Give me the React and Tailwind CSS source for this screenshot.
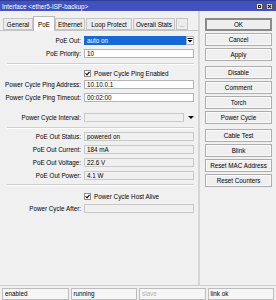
import React from 'react';

const FONT = "font-['Liberation_Sans',Arial,sans-serif]";

const tabs = [
    { name: 'General', w: 'w-[30px]' },
    { name: 'PoE', w: 'w-[22px]', active: true },
    { name: 'Ethernet', w: 'w-[30px]' },
    { name: 'Loop Protect', w: 'w-[46px]' },
    { name: 'Overall Stats', w: 'w-[42px]' },
    { name: '...', w: 'w-[12px]', dim: true },
];

const buttons = [
    { name: 'OK', cls: 'mt-0', primary: true },
    { name: 'Cancel', cls: 'mt-[2px]' },
    { name: 'Apply', cls: 'mt-[2px]' },
    { name: 'Disable', cls: 'mt-[5px]' },
    { name: 'Comment', cls: 'mt-[2px]' },
    { name: 'Torch', cls: 'mt-[2px]' },
    { name: 'Power Cycle', cls: 'mt-[2px]' },
    { name: 'Cable Test', cls: 'mt-[5px]' },
    { name: 'Blink', cls: 'mt-[2px]' },
    { name: 'Reset MAC Address', cls: 'mt-[2px]' },
    { name: 'Reset Counters', cls: 'mt-[2px]' },
];

const DownArrow = ({ bar }) => (
    <svg width="6" height="5" viewBox="0 0 6 5">
        {bar && <rect x="0.5" y="0" width="5" height="1" fill="#000" />}
        <polygon points={bar ? '0.5,2 5.5,2 3,4.6' : '0,1 6,1 3,4'} fill="#000" />
    </svg>
);

// rangée label + champ
const Row = ({ label, className = '', children }) => (
    <div className={`flex items-center h-[9px] ${className}`}>
        <div className="w-[82px] text-right pr-[1px] whitespace-nowrap">{label}</div>
        <div className="ml-[2px] flex items-center">{children}</div>
    </div>
);

const Input = ({ value, kind = 'edit', w = 'w-[110px]' }) => {
    const bg = kind === 'edit' ? 'bg-white border-[#b4b4b4]' : 'bg-[#f0f0f0] border-[#c8c8c8]';
    return (
        <div className={`${w} h-[9px] border ${bg} pl-[2px] leading-[7px] whitespace-nowrap overflow-hidden`}>
            {value}
        </div>
    );
};

const Check = ({ label, className = '' }) => (
    <div className={`flex items-center h-[8px] pl-[84px] ${className}`}>
        <div className="w-[7px] h-[7px] border border-[#8e8e8e] bg-white flex items-center justify-center">
            <svg width="5" height="5" viewBox="0 0 5 5">
                <path d="M0.6 2.4 L2 3.9 L4.4 0.9" stroke="#000" strokeWidth="1.1" fill="none" />
            </svg>
        </div>
        <span className="ml-[3px] whitespace-nowrap">{label}</span>
    </div>
);

const Separator = ({ className = '' }) => (
    <div className={`ml-[7px] w-[187px] h-[2px] border-t border-[#cfcfcf] border-b border-b-white ${className}`} />
);

export default function App() {
    return (
        <div className={`w-[276px] h-[300px] bg-[#f0f0f0] flex flex-col text-[6.3px] leading-[9px] text-black ${FONT}`}>
            {/* Barre de titre */}
            <div className="h-[11px] bg-[#4152bf] border-t border-[#2f3d9a] flex items-center justify-between pl-[2px] pr-[3px] text-white">
                <span className="whitespace-nowrap">Interface &lt;ether5-ISP-backup&gt;</span>
                <div className="flex gap-[3px]">
                    <div className="w-[7px] h-[7px] bg-[#e6e6e6] border border-[#555] flex items-center justify-center">
                        <div className="w-[3px] h-[3px] border border-[#222]" />
                    </div>
                    <div className="w-[7px] h-[7px] bg-[#e6e6e6] border border-[#555] flex items-center justify-center">
                        <svg width="5" height="5" viewBox="0 0 5 5">
                            <path d="M0.8 0.8 L4.2 4.2 M4.2 0.8 L0.8 4.2" stroke="#111" strokeWidth="1.1" />
                        </svg>
                    </div>
                </div>
            </div>

            <div className="flex flex-1 min-h-0">
                {/* Partie gauche */}
                <div className="w-[200px] border-r-2 border-[#d6d6d6] flex flex-col">
                    <div className="h-[19px] flex items-end pl-[3px] gap-[1px]">
                        {tabs.map((t) => (
                            <div
                                key={t.name}
                                className={
                                    t.active
                                        ? `${t.w} h-[15px] -mx-[1px] bg-[#fbfbfb] border border-b-0 border-[#b9b9b9] flex items-center justify-center relative top-[1px] z-10`
                                        : `${t.w} h-[12px] bg-[#ececec] border border-[#c4c4c4] flex items-center justify-center ${t.dim ? 'text-[#8c8c8c]' : ''}`
                                }
                            >
                                <span className="whitespace-nowrap">{t.name}</span>
                            </div>
                        ))}
                    </div>
                    <div className="flex-1 border-t border-[#c4c4c4] pt-[5px]">
                        <Row label="PoE Out:">
                            <div className="w-[110px] h-[9px] flex">
                                <div className="flex-1 bg-[#1668d6] border border-[#1668d6] text-white pl-[2px] leading-[7px]">auto on</div>
                                <div className="w-[8px] h-[9px] bg-white border border-[#b4b4b4] flex items-center justify-center">
                                    <DownArrow bar />
                                </div>
                            </div>
                        </Row>
                        <Row label="PoE Priority:" className="mt-[4px]">
                            <Input value="10" />
                        </Row>
                        <Separator className="mt-[5px]" />
                        <Check label="Power Cycle Ping Enabled" className="mt-[4px]" />
                        <Row label="Power Cycle Ping Address:" className="mt-[3px]">
                            <Input value="10.10.0.1" />
                        </Row>
                        <Row label="Power Cycle Ping Timeout:" className="mt-[4px]">
                            <Input value="00:02:00" />
                        </Row>
                        <Row label="Power Cycle Interval:" className="mt-[11px]">
                            <Input value="" kind="ro" w="w-[100px]" />
                            <div className="ml-[4px]"><DownArrow /></div>
                        </Row>
                        <Separator className="mt-[5px]" />
                        <Row label="PoE Out Status:" className="mt-[3px]">
                            <Input value="powered on" kind="ro" />
                        </Row>
                        <Row label="PoE Out Current:" className="mt-[4px]">
                            <Input value="184 mA" kind="ro" />
                        </Row>
                        <Row label="PoE Out Voltage:" className="mt-[4px]">
                            <Input value="22.6 V" kind="ro" />
                        </Row>
                        <Row label="PoE Out Power:" className="mt-[4px]">
                            <Input value="4.1 W" kind="ro" />
                        </Row>
                        <Separator className="mt-[4px]" />
                        <Check label="Power Cycle Host Alive" className="mt-[6px]" />
                        <Row label="Power Cycle After:" className="mt-[4px]">
                            <Input value="" kind="ro" />
                        </Row>
                    </div>
                </div>

                {/* Boutons à droite */}
                <div className="flex-1 pt-[7px] pl-[5px] pr-[4px] flex flex-col">
                    {buttons.map((b) => (
                        <div
                            key={b.name}
                            className={`${b.cls} h-[13px] flex items-center justify-center whitespace-nowrap bg-[#efefef] ${
                                b.primary ? 'border-2 border-[#8a8a8a]' : 'border border-[#adadad] shadow-[inset_0_0_0_1px_#fafafa]'
                            }`}
                        >
                            {b.name}
                        </div>
                    ))}
                </div>
            </div>

            {/* Barre d'état */}
            <div className="h-[15px] border-t border-[#cfcfcf] flex gap-[2px] px-[2px] pt-[2px]">
                {['enabled', 'running', 'slave', 'link ok'].map((s) => (
                    <div
                        key={s}
                        className={`flex-1 h-[12px] border border-[#bcbcbc] bg-[#f6f6f6] pl-[2px] leading-[10px] ${s === 'slave' ? 'text-[#b0b0b0]' : ''}`}
                    >
                        {s}
                    </div>
                ))}
            </div>
        </div>
    );
}
